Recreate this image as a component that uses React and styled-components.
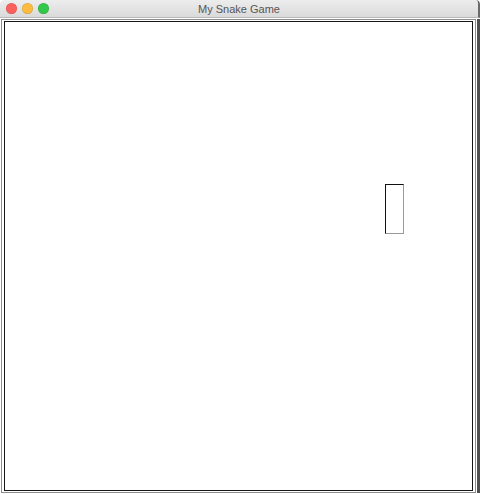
import React from "react";
import styled, { createGlobalStyle } from "styled-components";

const GlobalStyle = createGlobalStyle`
  html, body {
    margin: 0;
    padding: 0;
    background: #ffffff;
  }
`

const Window = styled.div`
  width: 480px;
  height: 494px;
  display: flex;
  flex-direction: column;
  background: #ffffff;
  overflow: hidden;
  border-radius: 4px 4px 0 0;
`

const TitleBar = styled.div`
  height: 17px;
  flex: none;
  position: relative;
  display: flex;
  align-items: center;
  justify-content: center;
  background: linear-gradient(#ededed, #dadada);
  border-bottom: 1px solid #b9b9b9;
  border-right: 2px solid #6a6a6a;
  border-radius: 4px 4px 0 0;
`

const Lights = styled.div`
  position: absolute;
  left: 6px;
  top: 3px;
  display: flex;
  gap: 5px;
`

const Light = styled.span`
  width: 11px;
  height: 11px;
  border-radius: 50%;
  background: ${p => p.color};
  box-shadow: inset 0 0 0 0.5px rgba(0, 0, 0, 0.15);
`

const Title = styled.span`
  font-family: "Liberation Sans", Arial, sans-serif;
  font-size: 11px;
  color: #555555;
  margin-left: 0;
`

const Body = styled.div`
  flex: 1;
  display: flex;
  padding: 1px 0 1px 1px;
`

const Frame = styled.div`
  flex: 1;
  display: flex;
  border: 1px solid #8c8c8c;
  padding: 1px 2px;
`

const Board = styled.div`
  flex: 1;
  position: relative;
  border: 1px solid #161616;
  background: #ffffff;
`

const Block = styled.div`
  position: absolute;
  box-sizing: border-box;
  border-top: 1px solid #111;
  border-left: 1px solid #111;
  border-right: 1px solid #9a9a9a;
  border-bottom: 1px solid #9a9a9a;
`

const Edge = styled.div`
  width: 3px;
  margin-left: 1px;
  background: #505050;
`

const snake = [{ x: 380, y: 162, w: 19, h: 50 }]

const App = () => {
    return (
        <Window>
            <GlobalStyle/>
            <TitleBar>
                <Lights>
                    <Light color="#fc605c"/>
                    <Light color="#fdbc40"/>
                    <Light color="#34c84a"/>
                </Lights>
                <Title>My Snake Game</Title>
            </TitleBar>
            <Body>
                <Frame>
                    <Board>
                        {snake.map((s, i) => (
                            <Block key={i} style={{ left: s.x, top: s.y, width: s.w, height: s.h }}/>
                        ))}
                    </Board>
                </Frame>
                <Edge/>
            </Body>
        </Window>
    )
}

export default App
